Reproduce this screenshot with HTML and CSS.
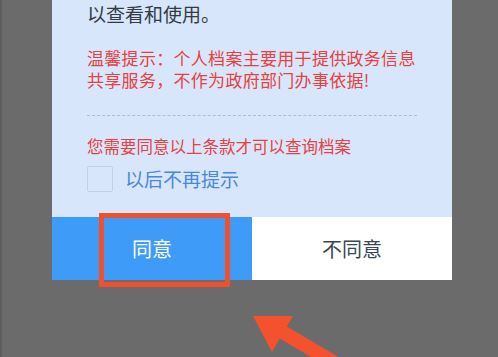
FILE: index.html
```html
<!DOCTYPE html>
<html lang="zh-CN">
<head>
  <meta charset="UTF-8">
  <meta name="viewport" content="width=device-width, initial-scale=1.0">
  <title>个人档案</title>
  <link rel="stylesheet" href="styles.css">
</head>
<body>
<div class="screen">
  <div class="dialog">
    <div class="dialog-body">
      <p class="intro">以查看和使用。</p>
      <p class="notice">温馨提示：个人档案主要用于提供政务信息共享服务，不作为政府部门办事依据!</p>
      <div class="divider"></div>
      <p class="require">您需要同意以上条款才可以查询档案</p>
      <label class="remember">
        <span class="checkbox"></span>
        <span>以后不再提示</span>
      </label>
    </div>
    <div class="actions">
      <button class="btn btn-agree">同意</button>
      <button class="btn btn-disagree">不同意</button>
      <div class="highlight"></div>
    </div>
  </div>

  <!-- pointer arrow drawn over the screenshot -->
  <svg class="arrow" width="498" height="357" viewBox="0 0 498 357">
    <line x1="272" y1="327" x2="350" y2="373" stroke="#f4512f" stroke-width="14"/>
    <polygon points="251,316 291,316 270,352" fill="#f4512f"/>
  </svg>
</div>
</body>
</html>
```

FILE: styles.css
```css
body {
  margin: 0;
  padding: 0;
  background-color: #6b6b6b;
  font-family: "Noto Sans CJK SC", "Noto Sans", sans-serif;
}

.screen {
  position: relative;
  width: 498px;
  height: 357px;
  overflow: hidden;
  background-color: #6b6b6b;
  border-left: 2px solid #5e5e5e;
  box-sizing: border-box;
}

.dialog {
  margin-left: 50px;
  width: 400px;
  background-color: #d7e6fb;
}

.dialog-body {
  padding: 0 35px 25px 35px;
}

.intro {
  margin: 0;
  font-size: 19px;
  line-height: 27px;
  color: #333a44;
}

.notice {
  margin: 20px 0 0 0;
  font-size: 17px;
  line-height: 22px;
  letter-spacing: 0.3px;
  color: #e8413f;
}

.divider {
  margin-top: 24px;
  border-top: 1px dashed #b4bcc8;
}

.require {
  margin: 19px 0 0 0;
  font-size: 16.5px;
  line-height: 22px;
  color: #e8413f;
}

.remember {
  display: flex;
  align-items: center;
  margin-top: 8px;
  font-size: 19px;
  color: #4a88dc;
}

.checkbox {
  width: 24px;
  height: 24px;
  margin-right: 12px;
  border: 1px solid #c3d0e2;
  border-radius: 2px;
}

.actions {
  position: relative;
  display: flex;
  height: 63px;
}

.btn {
  flex: 1;
  border: none;
  margin: 0;
  padding: 0;
  font-family: inherit;
  font-size: 20px;
}

.btn-agree {
  background-color: #3f9bf8;
  color: #ffffff;
}

.btn-disagree {
  background-color: #ffffff;
  color: #3a4656;
}

.highlight {
  position: absolute;
  left: 47px;
  top: -4px;
  width: 131px;
  height: 74px;
  box-sizing: border-box;
  border: 5px solid #f0502e;
}

.arrow {
  position: absolute;
  left: 0;
  top: 0;
}
```
